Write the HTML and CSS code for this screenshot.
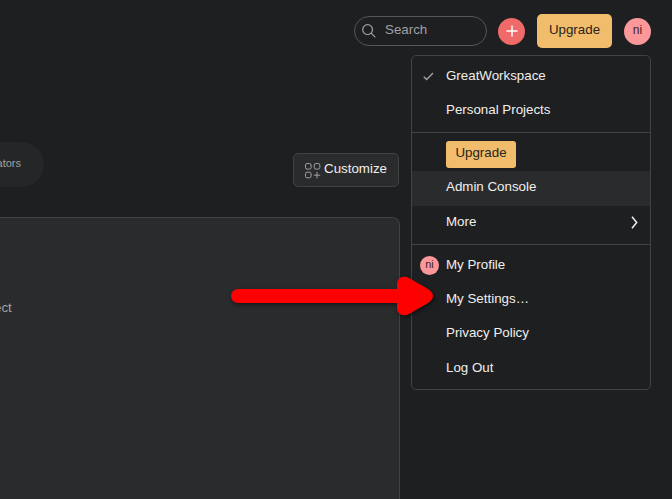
FILE: index.html
```html
<!DOCTYPE html>
<html lang="en">
<head>
<meta charset="utf-8">
<title>Home</title>
<link rel="stylesheet" href="styles.css">
</head>
<body>
<header class="topbar">
  <div class="search">
    <svg width="14" height="14" viewBox="0 0 14 14"><circle cx="5.6" cy="5.6" r="4.9"/><path d="M9.2 9.2L13.3 13.3"/></svg>
    <span>Search</span>
  </div>
  <button class="add" aria-label="Create"><svg width="12" height="12" viewBox="0 0 12 12"><path d="M6 .5v11M.5 6h11"/></svg></button>
  <button class="upgrade">Upgrade</button>
  <div class="account">
    <div class="avatar">ni</div>
    <nav class="menu">
      <div class="group workspaces">
        <div class="item"><svg class="check" width="11" height="9" viewBox="0 0 11 9"><path d="M.8 4.8L3.7 7.5 10 1"/></svg><span>GreatWorkspace</span></div>
        <div class="item"><span>Personal Projects</span></div>
      </div>
      <div class="group plan">
        <button class="upgrade small">Upgrade</button>
        <div class="item active"><span>Admin Console</span></div>
        <div class="item more"><span>More</span><svg class="chevron" width="7" height="13" viewBox="0 0 7 13"><path d="M1 .8L5.7 6.5 1 12.2"/></svg></div>
      </div>
      <div class="group personal">
        <div class="item"><div class="avatar mini">ni</div><span>My Profile</span></div>
        <div class="item"><span>My Settings…</span></div>
        <div class="item"><span>Privacy Policy</span></div>
        <div class="item"><span>Log Out</span></div>
      </div>
    </nav>
  </div>
</header>
<main class="content">
  <div class="toolbar">
    <div class="pill"><span>ators</span></div>
    <button class="customize">
      <svg width="16" height="16" viewBox="0 0 16 16"><rect x=".5" y=".5" width="5.6" height="5.6" rx="1.6"/><rect x="9.2" y=".5" width="5.6" height="5.6" rx="1.6"/><rect x=".5" y="9.2" width="5.6" height="5.6" rx="1.6"/><path d="M12 9v6.4M8.8 12.2h6.4"/></svg>
      <span>Customize</span>
    </button>
  </div>
  <section class="panel"><span>ect</span></section>
</main>
<svg class="arrow" width="220" height="54" viewBox="0 0 220 54"><path d="M13 20H172V15C172 9 178 6 184 9L203 20Q213 27 203 34L184 45C178 48 172 45 172 39V34H13A7 7 0 0 1 13 20Z"/></svg>
</body>
</html>
```

FILE: styles.css
```css
* { box-sizing: border-box; }

body {
  position: relative;
  margin: 0;
  width: 672px;
  height: 499px;
  overflow: hidden;
  background: #1e1f21;
  color: #f1efed;
  font: 13.33px/16px "Liberation Sans", Arial, sans-serif;
}

button {
  border: 0;
  padding: 0;
  color: inherit;
  font: inherit;
}

svg {
  display: block;
  flex: none;
  fill: none;
  stroke: #a2a0a2;
}

.topbar {
  display: flex;
  align-items: center;
  justify-content: flex-end;
  height: 62px;
  padding-right: 21px;
}

.search {
  display: flex;
  align-items: center;
  gap: 9px;
  width: 133px;
  height: 30px;
  margin-right: 11px;
  padding-left: 7px;
  border: 1px solid #565557;
  border-radius: 15px;
  color: #a2a0a2;
}

.search svg { stroke-width: 1.2; }

.search span { padding-bottom: 2px; }

.add {
  display: grid;
  place-items: center;
  width: 27px;
  height: 27px;
  margin-right: 12px;
  border-radius: 50%;
  background: #f06a6a;
}

.add svg {
  stroke: #fff;
  stroke-width: 1.5;
}

.upgrade {
  width: 75px;
  height: 34px;
  margin-right: 12px;
  padding-bottom: 2px;
  border-radius: 5px;
  background: #f1bd6c;
  color: #28231b;
}

.account { position: relative; }

.avatar {
  width: 27px;
  height: 27px;
  border-radius: 50%;
  background: #fc979a;
  color: #402327;
  font-size: 12px;
  line-height: 24px;
  text-align: center;
}

.menu {
  position: absolute;
  z-index: 1;
  top: 37px;
  right: 0;
  width: 240px;
  height: 335px;
  border: 1px solid #424244;
  border-radius: 5px;
  background: #1e1f21;
}

.group + .group { border-top: 1px solid #424244; }

.workspaces {
  height: 76px;
  padding-top: 4px;
}

.plan {
  height: 112px;
  padding-top: 8px;
}

.personal { padding-top: 4px; }

.item {
  display: flex;
  align-items: center;
  height: 34.2px;
  padding: 0 12px 1px 34px;
}

.item.active {
  height: 35px;
  padding-bottom: 3px;
  background: #2a2b2d;
}

.item.more { padding-bottom: 2px; }

.check {
  margin: 0 12px 0 -23px;
  stroke-width: 1.4;
}

.chevron {
  margin: 2px 0 0 auto;
  stroke: #f1efed;
  stroke-width: 1.5;
}

.upgrade.small {
  display: block;
  width: 70px;
  height: 27px;
  margin: 0 0 3px 34px;
  padding-bottom: 3px;
  border-radius: 3px;
}

.avatar.mini {
  width: 19px;
  height: 19px;
  margin: 1px 7px 0 -26px;
  font-size: 11px;
  line-height: 17px;
}

.content { width: 400px; }

.toolbar {
  display: flex;
  align-items: center;
  justify-content: space-between;
  height: 155px;
  padding: 61px 1px 0 0;
}

.pill {
  display: flex;
  align-items: center;
  justify-content: flex-end;
  width: 44px;
  height: 45px;
  margin-top: -12px;
  padding: 0 23px 2px 0;
  overflow: hidden;
  border-radius: 0 23px 23px 0;
  background: #252628;
  color: #a2a0a2;
  font-size: 11px;
}

.customize {
  display: flex;
  align-items: center;
  gap: 3px;
  width: 106px;
  height: 34px;
  margin-top: -1px;
  padding-left: 11px;
  border: 1px solid #424244;
  border-radius: 5px;
  background: #2a2b2d;
}

.customize svg { margin-top: 2px; }

.customize span { padding-bottom: 2px; }

.panel {
  display: flex;
  height: 290px;
  padding-top: 82px;
  border: 1px solid #424244;
  border-left: 0;
  border-radius: 0 8px 0 0;
  background: #2a2b2d;
  color: #a2a0a2;
}

.panel span { margin-left: -6px; }

.arrow {
  position: absolute;
  z-index: 2;
  left: 225px;
  top: 269px;
  overflow: visible;
  fill: #f00;
  stroke: none;
  filter: drop-shadow(1px 2px 2px rgba(0, 0, 0, 0.5));
}
```
